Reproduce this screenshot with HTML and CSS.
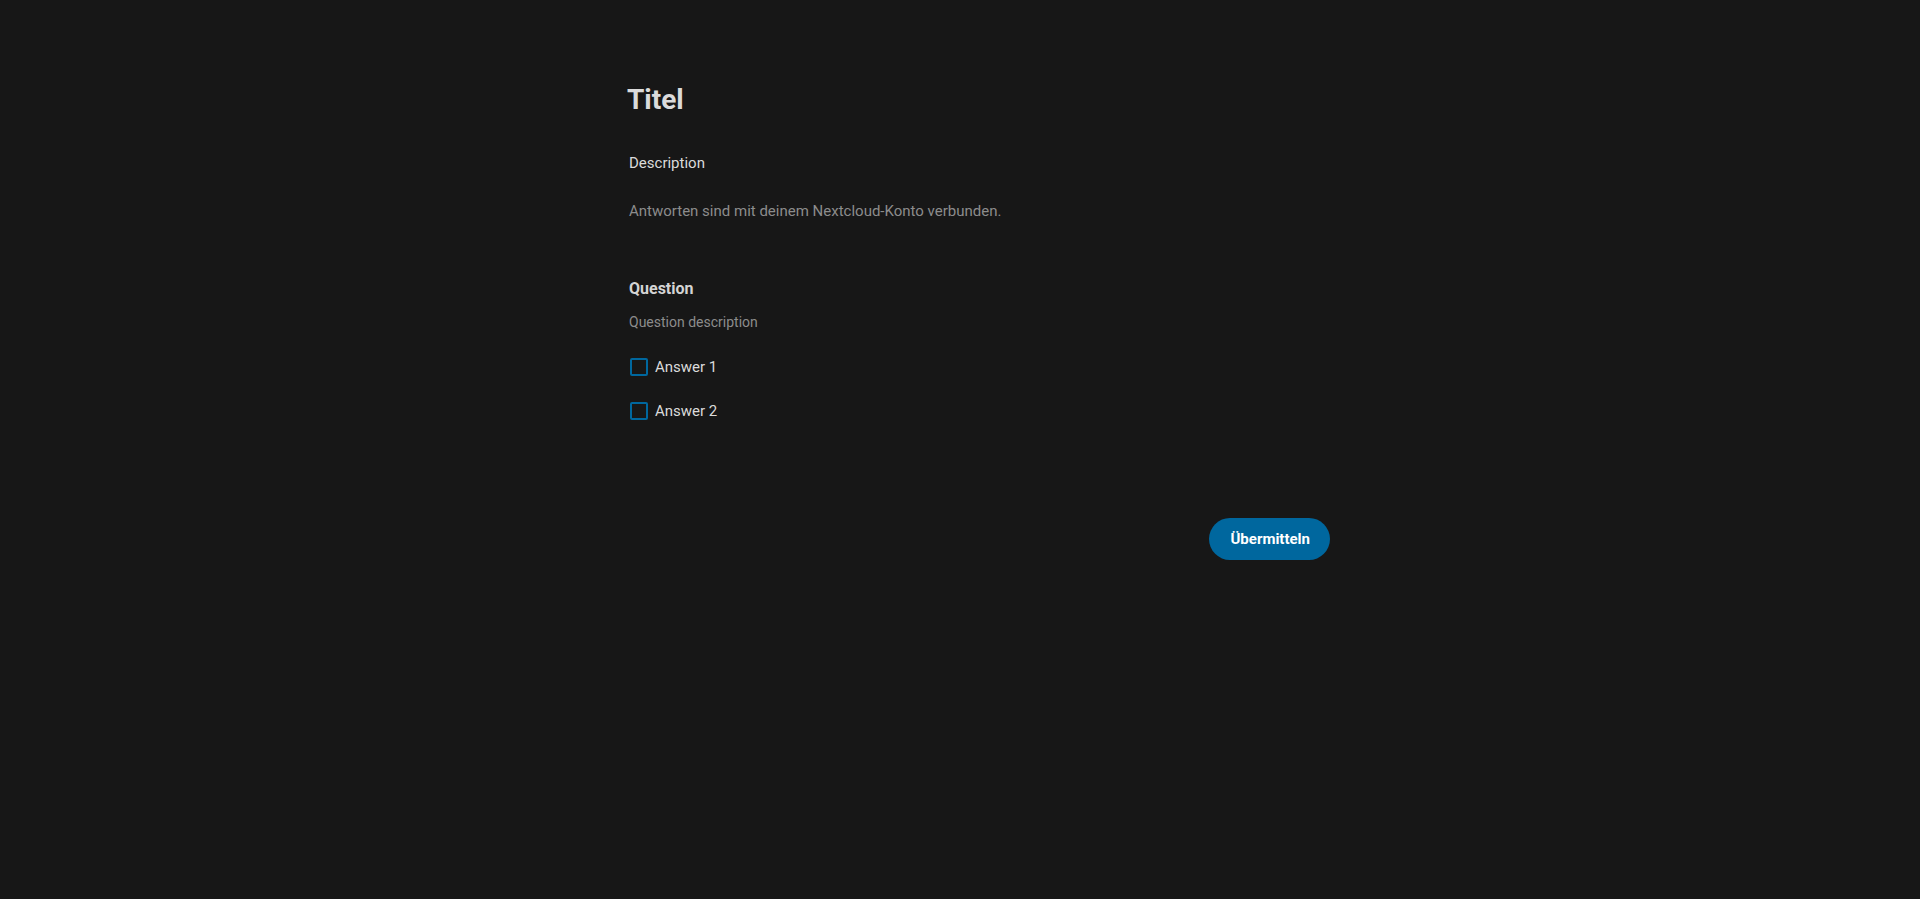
FILE: index.html
```html
<!DOCTYPE html>
<html lang="de">
<head>
  <meta charset="UTF-8">
  <title>Titel - Forms</title>
  <link rel="stylesheet" href="styles.css">
</head>
<body>

<form class="form" id="submitForm">
  <header class="form-header">
    <h2 class="form-title">Titel</h2>
    <p class="form-desc">Description</p>
    <p class="form-info">Antworten sind mit deinem Nextcloud-Konto verbunden.</p>
  </header>

  <section class="question">
    <h3 class="question-title">Question</h3>
    <p class="question-desc">Question description</p>
    <ul class="answers">
      <li class="answer">
        <label><input type="checkbox" name="q1"><span class="box"></span>Answer 1</label>
      </li>
      <li class="answer">
        <label><input type="checkbox" name="q1"><span class="box"></span>Answer 2</label>
      </li>
    </ul>
  </section>

  <div class="form-actions">
    <button type="submit" class="submit">Übermitteln</button>
  </div>
</form>

</body>
</html>
```

FILE: styles.css
```css
body {
  margin: 0;
  background-color: #171717;
  color: #dbdbdb;
  font-family: Roboto, "Liberation Sans", sans-serif;
  font-size: 15px;
  min-height: 100vh;
}

.form {
  width: 703px;
  margin: 0 auto;
  padding: 80px 0 0 37px;
}

.form-title {
  margin: 0;
  font-size: 28px;
  font-weight: bold;
  line-height: 40px;
  color: #dbdbdb;
}

.form-desc {
  margin: 0;
  padding-left: 2px;
  line-height: 20px;
  margin-top: 33px;
}

.form-info {
  margin: 0;
  padding-left: 2px;
  margin-top: 28px;
  line-height: 20px;
  color: #8c8c8c;
}

.question {
  padding-left: 2px;
  margin-top: 58px;
}

.question-title {
  margin: 0;
  font-size: 16px;
  font-weight: bold;
  line-height: 20px;
  color: #d4d4d4;
}

.question-desc {
  margin: 0;
  margin-top: 13px;
  font-size: 14px;
  line-height: 20px;
  color: #8c8c8c;
}

.answers {
  list-style: none;
  margin: 13px 0 0;
  padding: 0;
}

.answer label {
  display: flex;
  align-items: center;
  gap: 7px;
  height: 44px;
  cursor: pointer;
}

.answer input {
  display: none;
}

.box {
  width: 14px;
  height: 14px;
  margin-left: 1px;
  border: 2px solid #00679e;
  border-radius: 2px;
}

.form-actions {
  display: flex;
  justify-content: flex-end;
  margin-top: 85px;
}

.submit {
  height: 42px;
  padding: 0 20px 0 21px;
  border: none;
  border-radius: 21px;
  background-color: #00679e;
  color: #fff;
  font-family: inherit;
  font-size: 15px;
  font-weight: bold;
  cursor: pointer;
}
```
